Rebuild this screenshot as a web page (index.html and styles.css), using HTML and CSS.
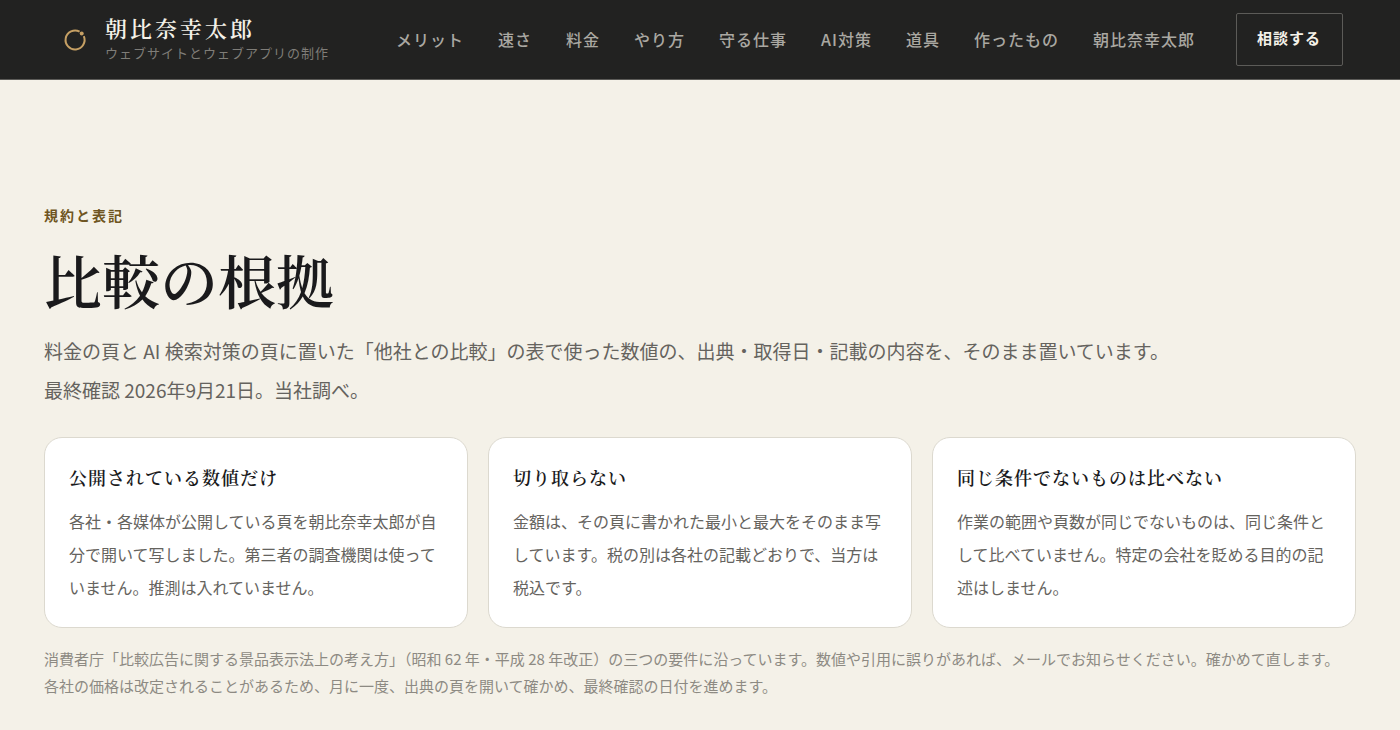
FILE: index.html
```html
<!DOCTYPE html>
<html lang="ja">
  <head>
    <meta charset="UTF-8" />
    <meta name="viewport" content="width=device-width, initial-scale=1.0" />
    <title>比較の根拠 | 朝比奈幸太郎</title>
    <link rel="stylesheet" href="styles.css">
  </head>
  <body>
    <header class="header">
      <a class="brand" href="#">
        <svg class="mark" viewBox="0 0 36 36" aria-hidden="true">
          <path d="M22.6 9.6A9.5 9.5 0 1 0 26.8 14.2" />
          <circle cx="24.7" cy="11.4" r="2" />
        </svg>
        <span class="brand-text">
          <span class="brand-name">朝比奈幸太郎</span>
          <span class="brand-sub">ウェブサイトとウェブアプリの制作</span>
        </span>
      </a>
      <nav class="nav">
        <a href="#">メリット</a>
        <a href="#">速さ</a>
        <a href="#">料金</a>
        <a href="#">やり方</a>
        <a href="#">守る仕事</a>
        <a href="#">AI対策</a>
        <a href="#">道具</a>
        <a href="#">作ったもの</a>
        <a href="#">朝比奈幸太郎</a>
      </nav>
      <a class="contact" href="#">相談する</a>
    </header>

    <main class="container">
      <p class="eyebrow">規約と表記</p>
      <h1>比較の根拠</h1>
      <p class="lead">
        料金の頁と AI 検索対策の頁に置いた「他社との比較」の表で使った数値の、出典・取得日・記載の内容を、そのまま置いています。<br>最終確認 2026年9月21日。当社調べ。
      </p>
      <div class="cards">
        <section class="card">
          <h2>公開されている数値だけ</h2>
          <p>各社・各媒体が公開している頁を朝比奈幸太郎が自分で開いて写しました。第三者の調査機関は使っていません。推測は入れていません。</p>
        </section>
        <section class="card">
          <h2>切り取らない</h2>
          <p>金額は、その頁に書かれた最小と最大をそのまま写しています。税の別は各社の記載どおりで、当方は税込です。</p>
        </section>
        <section class="card">
          <h2>同じ条件でないものは比べない</h2>
          <p>作業の範囲や頁数が同じでないものは、同じ条件として比べていません。特定の会社を貶める目的の記述はしません。</p>
        </section>
      </div>
      <p class="note">
        消費者庁「比較広告に関する景品表示法上の考え方」（昭和 62 年・平成 28 年改正）の三つの要件に沿っています。数値や引用に誤りがあれば、メールでお知らせください。確かめて直します。<br>各社の価格は改定されることがあるため、月に一度、出典の頁を開いて確かめ、最終確認の日付を進めます。
      </p>
    </main>
  </body>
</html>
```

FILE: styles.css
```css
*,
::before,
::after {
  box-sizing: border-box;
}

body {
  margin: 0;
  font-family: "Noto Sans CJK JP", sans-serif;
  font-size: 16px;
  color: #1a1a1c;
  background-color: #f4f1e8;
}

h1,
h2,
p {
  margin: 0;
}

a {
  color: inherit;
  text-decoration: none;
}

/* header */
.header {
  display: flex;
  align-items: center;
  min-height: 80px;
  padding: 0 57px;
  background-color: #222221;
  border-bottom: 1px solid #5c5b58;
}

.brand {
  display: flex;
  align-items: center;
  gap: 12px;
}

.mark {
  width: 36px;
  height: 36px;
  fill: none;
  stroke: #c6a064;
  stroke-width: 2;
}

.mark circle {
  fill: #c6a064;
  stroke: none;
}

.brand-text {
  display: flex;
  flex-direction: column;
  gap: 2px;
  padding-bottom: 2px;
}

.brand-name {
  font-family: "Noto Serif CJK JP", "Noto Sans CJK JP", serif;
  font-size: 22px;
  font-weight: 600;
  line-height: 26px;
  letter-spacing: 3px;
  color: #f4f1e8;
}

.brand-sub {
  font-size: 13px;
  line-height: 20px;
  letter-spacing: 1px;
  color: #7f7d78;
}

.nav {
  display: flex;
  gap: 34px;
  margin-left: auto;
  padding-bottom: 2px;
  font-weight: 500;
  letter-spacing: 1px;
  color: #aaa8a2;
  white-space: nowrap;
}

.contact {
  margin-left: 41px;
  padding: 0 21px 4px 20px;
  font-size: 15px;
  font-weight: 700;
  line-height: 47px;
  letter-spacing: 1px;
  color: #f4f1e8;
  border: 1px solid #5c5b58;
  border-radius: 2px;
  white-space: nowrap;
}

/* page */
.container {
  padding: 123px 44px 28px;
}

.eyebrow {
  font-size: 14px;
  font-weight: 700;
  line-height: 24px;
  letter-spacing: 2px;
  color: #6f5522;
}

h1 {
  margin-top: 14px;
  font-family: "Noto Serif CJK JP", "Noto Sans CJK JP", serif;
  font-size: 58px;
  font-weight: 600;
  line-height: 76px;
}

.lead {
  margin-top: 14px;
  font-size: 19px;
  line-height: 39px;
  color: #65635e;
}

.cards {
  display: grid;
  grid-template-columns: repeat(3, 1fr);
  gap: 20px;
  margin-top: 28px;
}

.card {
  padding: 21px 24px 23px;
  background-color: #fff;
  border: 1px solid #dcd9cf;
  border-radius: 18px;
}

.card h2 {
  font-family: "Noto Serif CJK JP", "Noto Sans CJK JP", serif;
  font-size: 18px;
  font-weight: 600;
  line-height: 36px;
  letter-spacing: 1px;
}

.card p {
  margin-top: 10px;
  line-height: 33px;
  color: #65635e;
}

.note {
  margin-top: 17px;
  font-size: 15px;
  line-height: 27px;
  color: #8d8a83;
}

@media screen and (max-width: 1200px) {
  .header {
    flex-wrap: wrap;
    gap: 16px;
    padding: 16px 24px;
  }
  .nav {
    flex-wrap: wrap;
    gap: 16px;
    margin-left: 0;
  }
  .contact {
    margin-left: 0;
  }
  .cards {
    grid-template-columns: 1fr;
  }
}
```
